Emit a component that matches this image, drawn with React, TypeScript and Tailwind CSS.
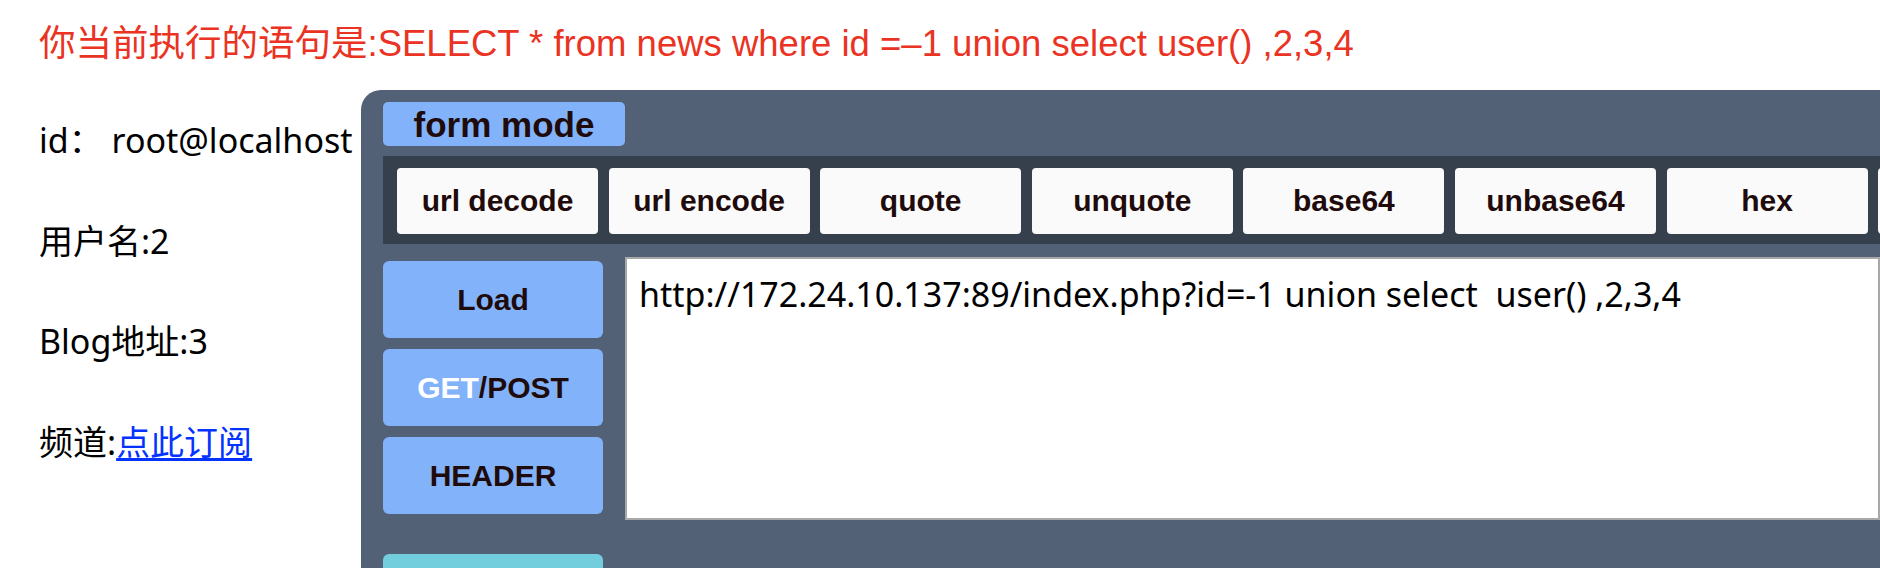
import React from 'react';

const tools = ['url decode', 'url encode', 'quote', 'unquote', 'base64', 'unbase64', 'hex', ''];

const sqlUrl = 'http://172.24.10.137:89/index.php?id=-1 union select  user() ,2,3,4';

export default function App() {
  return (
    <div className="h-[568px] w-[1880px] overflow-hidden bg-white pl-[39px] pt-[23px]">
      <h1 className="text-[36.5px] leading-[42px] text-[#ea3323] font-['Liberation_Sans','Noto_Sans_CJK_SC',sans-serif]">
        你当前执行的语句是:SELECT * from news where id =–1 union select user() ,2,3,4
      </h1>

      <div className="mt-[25px] flex">
        {/* query result */}
        <div className="flex w-[322px] shrink-0 flex-col gap-[60.7px] pt-[30px] text-[34px] leading-[40px] text-black font-['Noto_Sans','Noto_Sans_CJK_SC',sans-serif]">
          <p>id： root@localhost</p>
          <p>用户名:2</p>
          <p>Blog地址:3</p>
          <p>
            频道:
            <a href="#" className="text-[#0433ff] underline underline-offset-[3px]">
              点此订阅
            </a>
          </p>
        </div>

        {/* hackbar panel */}
        <div className="h-[520px] flex-1 overflow-hidden rounded-tl-[20px] bg-[#536176] pl-[22px] pt-[12px] font-['Liberation_Sans',sans-serif] font-bold text-[#1f0b0b]">
          <div className="flex h-[44px] w-[242px] items-center justify-center rounded-[5px] bg-[#82b3fa] text-[35px] leading-none">
            form mode
          </div>

          <div className="mt-[10px] flex h-[88px] gap-[10.6px] overflow-hidden bg-[#36404d] pl-[14px] pt-[12px]">
            {tools.map((t, i) => (
              <button
                key={i}
                className="flex h-[66px] w-[201px] shrink-0 items-center justify-center rounded-[4px] bg-[#fafafa] text-[30px] leading-none"
              >
                {t}
              </button>
            ))}
          </div>

          <div className="mt-[13px] flex items-start">
            <div className="flex w-[220px] shrink-0 flex-col gap-[11px] pt-[4px]">
              <button className="flex h-[77px] items-center justify-center rounded-[6px] bg-[#82b3fa] text-[30px] leading-none">
                Load
              </button>
              <button className="flex h-[77px] items-center justify-center rounded-[6px] bg-[#82b3fa] text-[30px] leading-none">
                <span className="text-white">GET</span>/POST
              </button>
              <button className="flex h-[77px] items-center justify-center rounded-[6px] bg-[#82b3fa] text-[30px] leading-none">
                HEADER
              </button>
              <button className="mt-[29px] h-[77px] rounded-[6px] bg-[#72cddc]" />
            </div>
            <textarea
              readOnly
              value={sqlUrl}
              className="ml-[22px] h-[263px] flex-1 resize-none border-2 border-[#a8a8a8] bg-white px-[12px] pt-[15px] text-[34px] font-normal leading-[40px] text-black outline-none font-['Noto_Sans',sans-serif]"
            />
          </div>
        </div>
      </div>
    </div>
  );
}
